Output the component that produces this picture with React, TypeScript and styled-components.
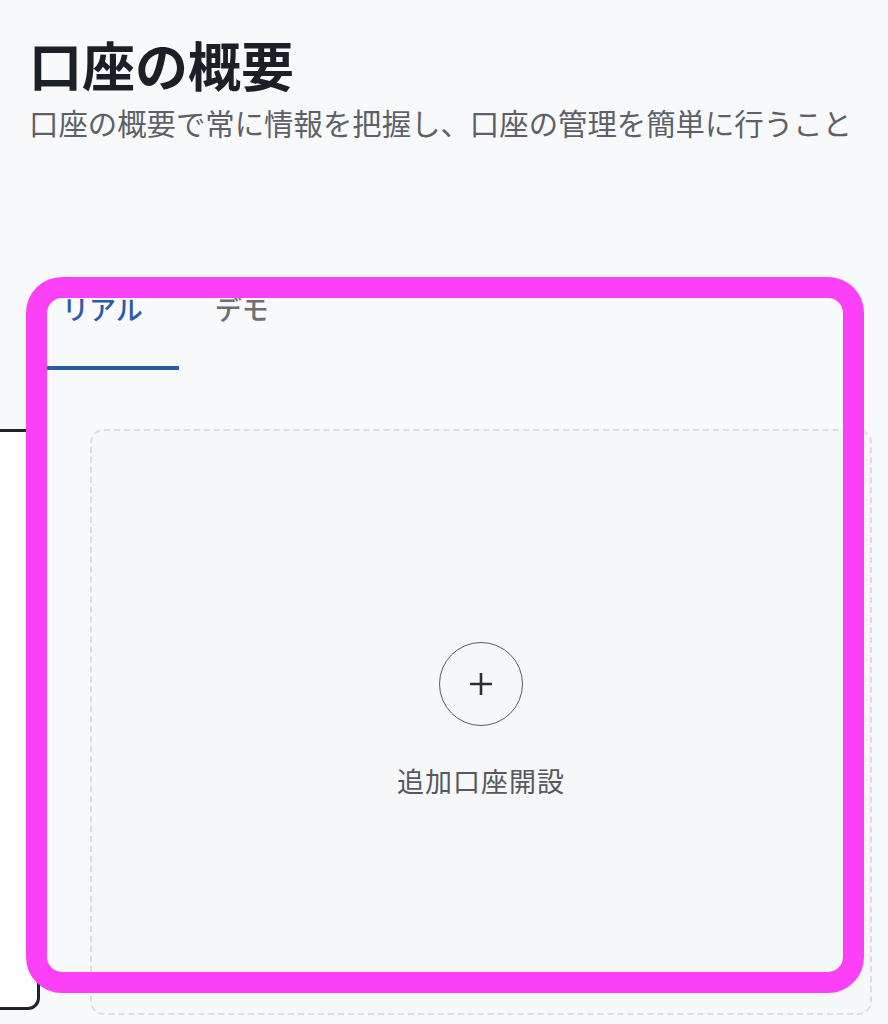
import React from "react";
import styled, { createGlobalStyle } from "styled-components";

const GlobalStyle = createGlobalStyle`
  html, body {
    margin: 0;
    padding: 0;
    background: #f8f9fa;
  }
  body {
    font-family: "Noto Sans CJK JP", "Noto Sans", sans-serif;
  }
`;

const Page = styled.div`
  position: relative;
  width: 888px;
  height: 1024px;
  overflow: hidden;
  background: #f8f9fa;
`;

const Header = styled.header`
  padding: 32px 0 0 29px;
  display: flex;
  flex-direction: column;
  gap: 6px;
`;

const Title = styled.h1`
  margin: 0;
  font-size: 53px;
  line-height: 64px;
  font-weight: 700;
  color: #1b1f26;
`;

const Subtitle = styled.p`
  margin: 0;
  font-size: 29.4px;
  line-height: 40px;
  font-weight: 400;
  color: #5d6167;
  white-space: nowrap;
`;

const TabList = styled.div`
  display: flex;
  margin-top: 132px;
  padding-left: 26px;
`;

const Tab = styled.button<{ $active?: boolean }>`
  appearance: none;
  background: none;
  border: none;
  margin: 0;
  padding: 18px 36px 0;
  height: 96px;
  font-family: inherit;
  font-size: 27px;
  line-height: 34px;
  font-weight: 500;
  color: ${(p) => (p.$active ? "#2d5ca6" : "#6b6e73")};
  border-bottom: 4px solid ${(p) => (p.$active ? "#2a5ba8" : "transparent")};
  display: flex;
  align-items: flex-start;
  cursor: pointer;
`;

const Carousel = styled.div`
  margin-top: 59px;
  overflow: hidden;
`;

const Track = styled.div`
  display: flex;
  gap: 50px;
  transform: translateX(-742px);
`;

const AccountCard = styled.div`
  flex: 0 0 782px;
  height: 581px;
  box-sizing: border-box;
  border: 3px solid #222428;
  border-radius: 12px;
  background: #ffffff;
`;

const AddCard = styled.button`
  flex: 0 0 782px;
  height: 586px;
  box-sizing: border-box;
  border: 2px dashed #dcdde0;
  border-radius: 14px;
  background: #f6f7f9;
  display: flex;
  flex-direction: column;
  align-items: center;
  justify-content: center;
  gap: 38px;
  padding: 0 0 4px;
  font-family: inherit;
  cursor: pointer;
`;

const PlusCircle = styled.span`
  width: 84px;
  height: 84px;
  box-sizing: border-box;
  border: 1.5px solid #5a5d62;
  border-radius: 50%;
  display: flex;
  align-items: center;
  justify-content: center;
  color: #2a2c30;
`;

const AddLabel = styled.span`
  font-size: 27px;
  line-height: 34px;
  color: #55585d;
  letter-spacing: 1px;
`;

const Highlight = styled.div`
  position: absolute;
  left: 26px;
  top: 277px;
  width: 838px;
  height: 716px;
  box-sizing: border-box;
  border: 21px solid #fc40f8;
  border-radius: 36px;
  pointer-events: none;
`;

export default function App() {
  return (
    <>
      <GlobalStyle />
      <Page>
        <Header>
          <Title>口座の概要</Title>
          <Subtitle>口座の概要で常に情報を把握し、口座の管理を簡単に行うこと</Subtitle>
        </Header>
        <TabList>
          <Tab $active>リアル</Tab>
          <Tab>デモ</Tab>
        </TabList>
        <Carousel>
          <Track>
            <AccountCard />
            <AddCard>
              <PlusCircle>
                <svg width="26" height="26" viewBox="0 0 26 26" fill="none">
                  <path d="M13 2v22M2 13h22" stroke="currentColor" strokeWidth="2.6" />
                </svg>
              </PlusCircle>
              <AddLabel>追加口座開設</AddLabel>
            </AddCard>
          </Track>
        </Carousel>
        <Highlight />
      </Page>
    </>
  );
}
